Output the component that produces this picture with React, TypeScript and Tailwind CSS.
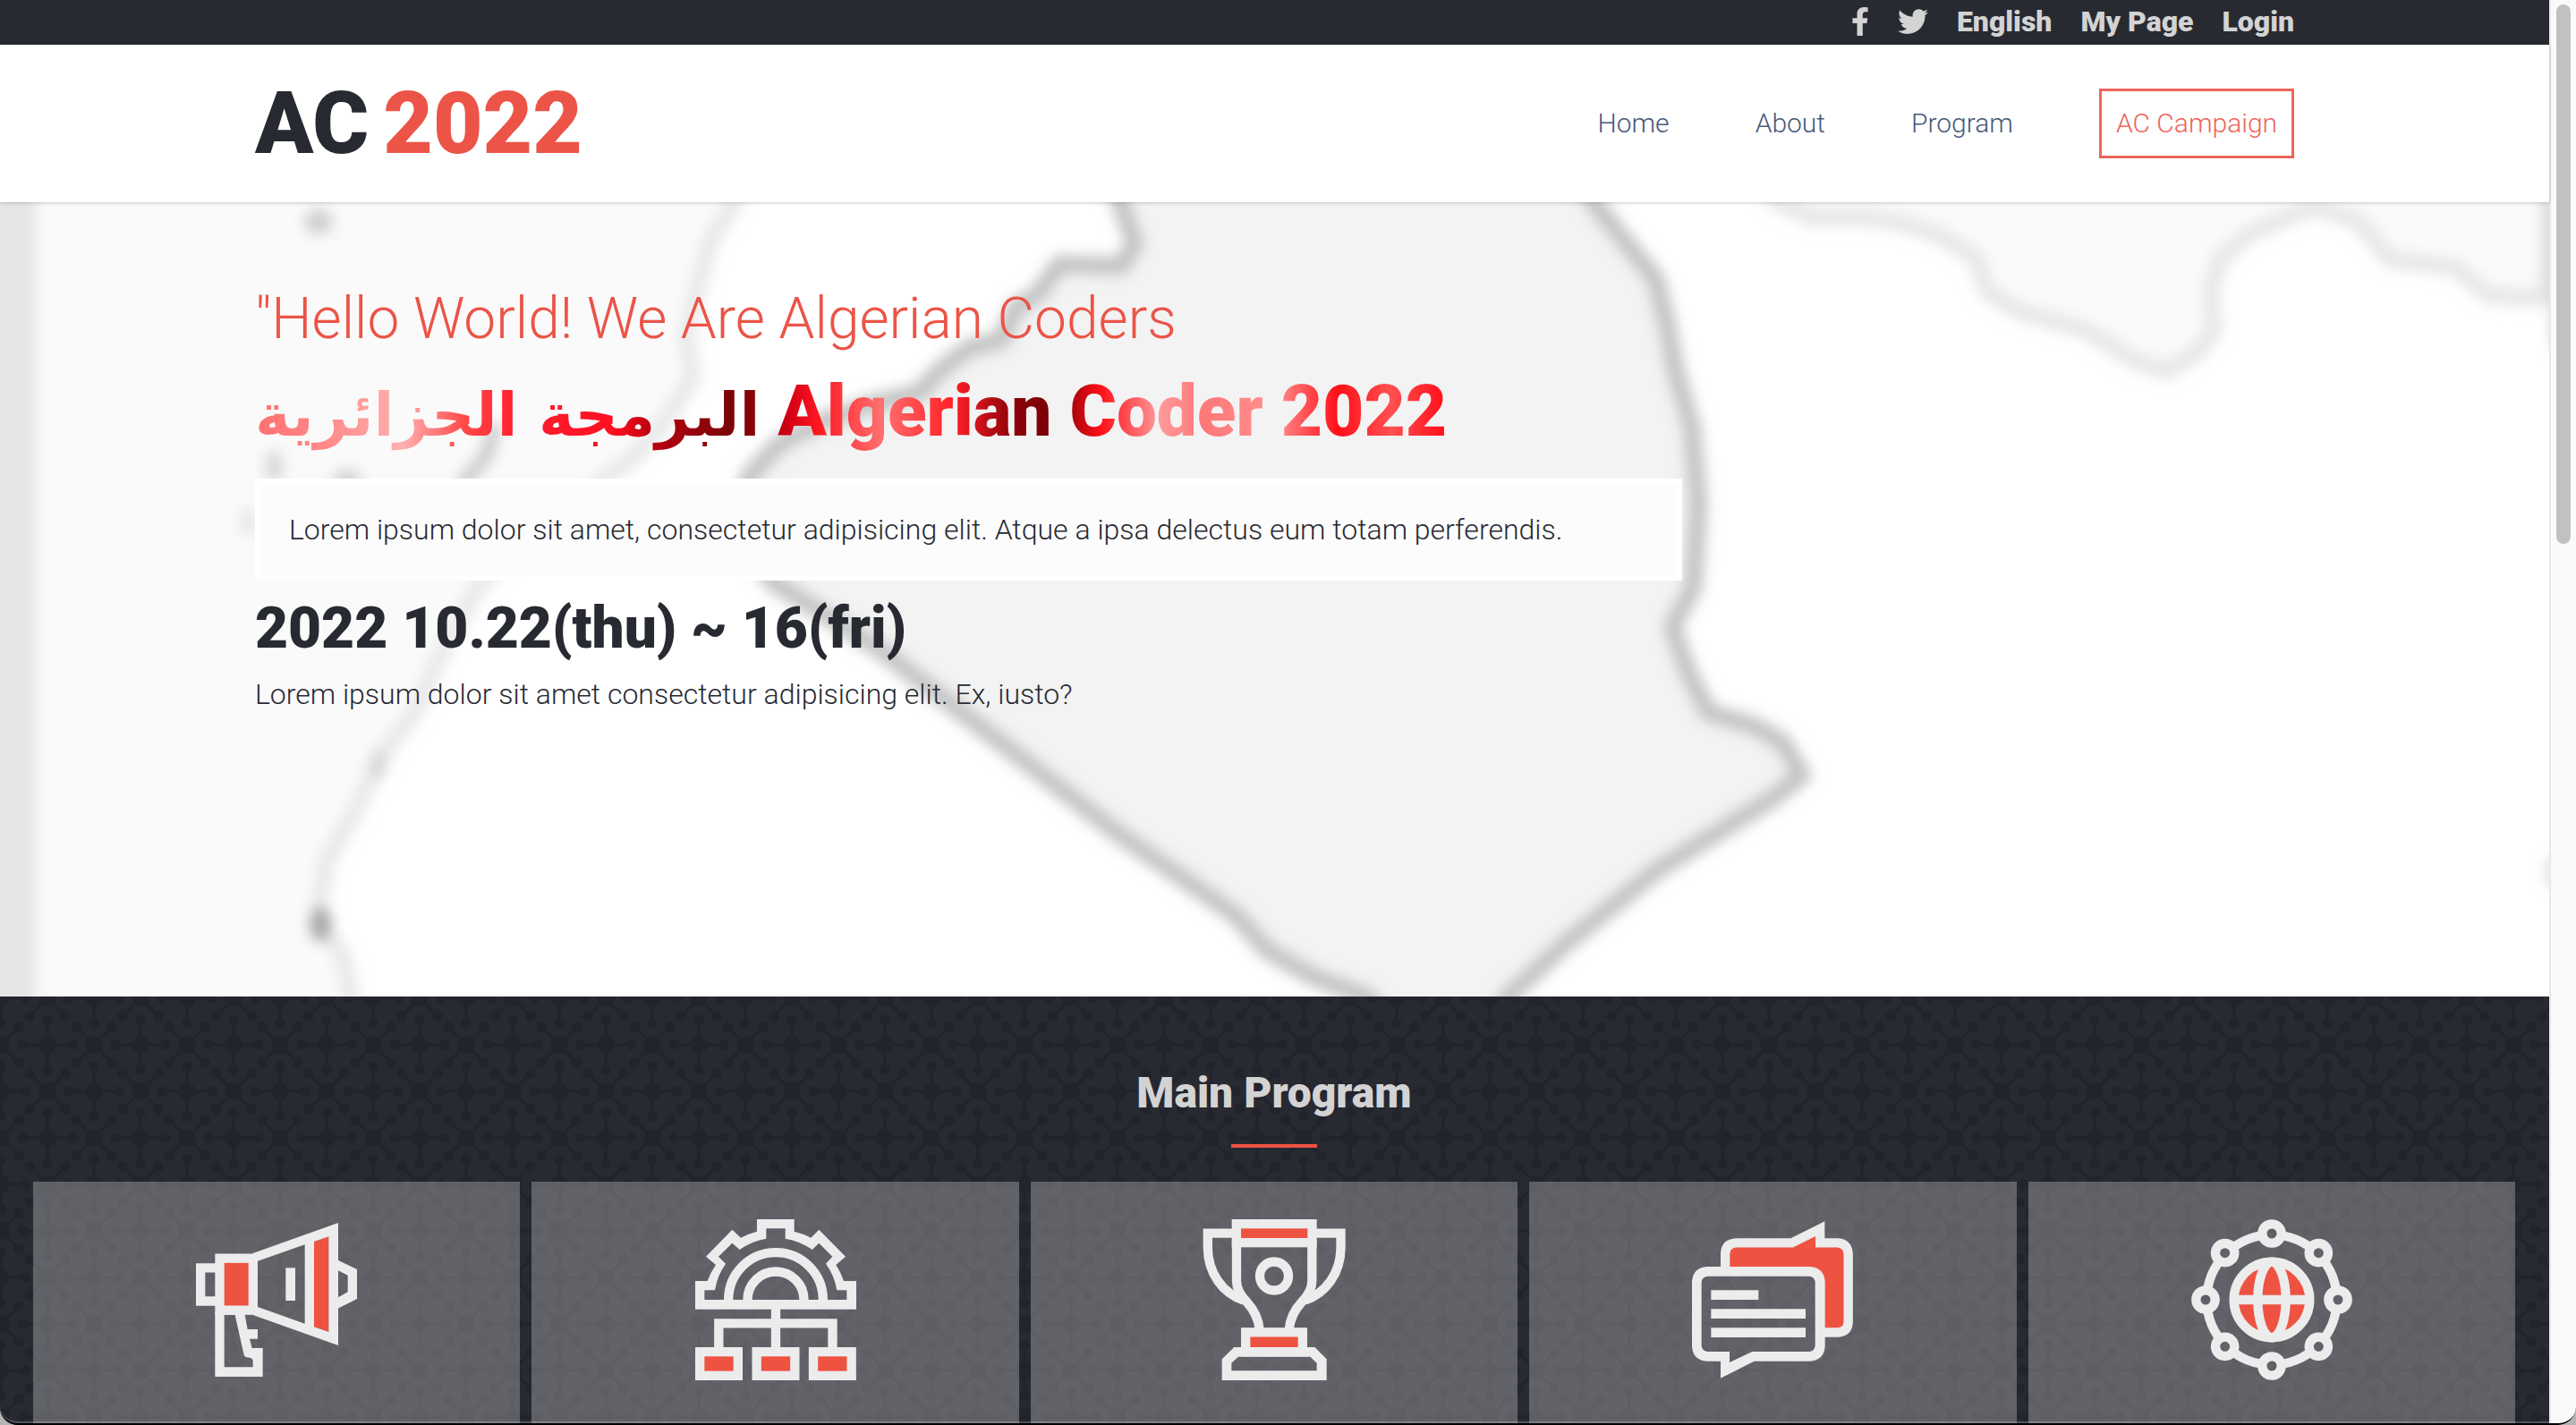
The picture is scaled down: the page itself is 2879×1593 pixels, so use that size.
import React from "react";
import { FaFacebookF, FaTwitter } from "react-icons/fa";

const LIGHT = "#ececec";
const RED = "#ee5342";

function MegaphoneIcon() {
  return (
    <svg viewBox="120 129 540 540" className="size-[180px]" aria-hidden="true">
      <path d="M199 292H135.5V403.5H199" fill="none" stroke={LIGHT} strokeWidth="31" />
      <path d="M516 204L565 187V507L516 490Z" fill={RED} />
      <path
        fillRule="evenodd"
        fill={LIGHT}
        d="M311 243L597 141V552L311 450ZM327 269V423L485 479V214ZM516 204V490L565 507V187Z"
      />
      <rect x="199.5" y="260" width="112" height="174" fill={RED} stroke={LIGHT} strokeWidth="31" />
      <rect x="421" y="292" width="32" height="110" fill={LIGHT} />
      <path fillRule="evenodd" fill={LIGHT} d="M596 266L660 297V396L596 428ZM597 301V391L629 373V317Z" />
      <path
        fillRule="evenodd"
        fill={LIGHT}
        d="M184 440V657H344V561H308L300 530H327V498H293L284 450V440ZM215 450H251L280 580Q282 591 290 592L300 593Q310 595 311 603V625H215Z"
      />
    </svg>
  );
}

function OrganizationIcon() {
  return (
    <svg viewBox="111 129 540 540" className="size-[180px]" aria-hidden="true">
      <path
        fillRule="evenodd"
        fill={LIGHT}
        d="M111 431V336H152A242 242 0 0 1 180 282L147 254L235 164L264 191A242 242 0 0 1 318 170V129H443V170A242 242 0 0 1 499 191L526 164L615 254L583 282A242 242 0 0 1 609 336H651V431ZM142 399H619V367H586A212 212 0 0 0 549 278L571 254L526 209L503 231A212 212 0 0 0 413 194V160H349V194A212 212 0 0 0 260 231L235 209L189 254L213 278A212 212 0 0 0 177 367H142Z"
      />
      <g fill="none" stroke={LIGHT} strokeWidth="31">
        <path d="M222.500 415V399A158.500 158.500 0 0 1 539.500 399V415" />
        <path d="M286.500 415V399A94.500 94.500 0 0 1 475.500 399V415" />
        <path d="M381 425V570M190 570V478H571.500V570" />
        <g fill={RED}>
          <rect x="126.500" y="573.500" width="128" height="80" />
          <rect x="317" y="573.500" width="128" height="80" />
          <rect x="507" y="573.500" width="128" height="80" />
        </g>
      </g>
    </svg>
  );
}

function TrophyIcon() {
  return (
    <svg viewBox="102 129 540 540" className="size-[180px]" aria-hidden="true">
      <g fill="none" stroke={LIGHT} strokeWidth="31">
        <path d="M246 176H149.500V225C150 310 200 378 270 401" />
        <path d="M499 176H595.500V225C595 310 545 378 475 401" />
        <path d="M246 200V335C246 365 262 387 280 406C302 430 320 460 323 500" />
        <path d="M499 200V335C499 365 483 387 465 406C443 430 425 460 422 500" />
        <rect x="245.500" y="144.500" width="254" height="63" fill={RED} />
        <circle cx="372" cy="319.500" r="48" />
        <rect x="276.500" y="508" width="191" height="66" fill={RED} />
      </g>
      <path
        fillRule="evenodd"
        fill={LIGHT}
        d="M238 558H508L548 598V669H197V598ZM252 590L229 611V637H515V611L493 590Z"
      />
    </svg>
  );
}

function ChatIcon() {
  return (
    <svg viewBox="123 129 540 540" className="size-[180px]" aria-hidden="true">
      <path
        fill={RED}
        d="M245 292V243Q252 222 272 220H457L540 183V220H612Q633 226 636 245V475Q633 494 612 497H565V340Q566 292 520 290Z"
      />
      <path
        fill="none"
        stroke={LIGHT}
        strokeWidth="31"
        d="M234.500 296V243Q236 210 272 208H458L552.500 161V208H612Q645 211 647 245V475Q645 506 612 508.500H560"
      />
      <path
        fillRule="evenodd"
        fill={LIGHT}
        d="M173 288H520Q566 292 569 338V555Q566 602 518 605H332L219 662V605H173Q126 602 123 555V338Q126 292 173 288ZM175 320Q157 322 155 340V553Q157 571 175 573H249V609L325 573H517Q534 571 536 553V340Q534 322 517 320Z"
      />
      <path fill={LIGHT} d="M187 367H346V399H187ZM187 430H504V462H187ZM187 493H504V525H187Z" />
    </svg>
  );
}

const NODES = [
  [384, 177],
  [541, 242],
  [606, 399],
  [541, 556],
  [384, 621],
  [227, 556],
  [162, 399],
  [227, 242],
];

function NetworkIcon() {
  return (
    <svg viewBox="114 129 540 540" className="size-[180px]" aria-hidden="true">
      <mask id="ring-gaps" maskUnits="userSpaceOnUse" x="114" y="129" width="540" height="540">
        <rect x="114" y="129" width="540" height="540" fill="#fff" />
        {NODES.map(([x, y]) => (
          <circle key={`${x}-${y}`} cx={x} cy={y} r="30" fill="#000" />
        ))}
      </mask>
      <g fill="none" stroke={LIGHT} strokeWidth="31">
        <circle cx="384" cy="399" r="218" mask="url(#ring-gaps)" />
        {NODES.map(([x, y]) => (
          <circle key={`${x}-${y}`} cx={x} cy={y} r="32" />
        ))}
        <circle cx="384" cy="399" r="127" fill={RED} />
        <ellipse cx="384" cy="399" rx="47" ry="127" />
        <path d="M260 399H508" />
      </g>
    </svg>
  );
}

function MapBackdrop() {
  return (
    <svg
      viewBox="0 123 1552 484"
      preserveAspectRatio="xMidYMid slice"
      className="absolute inset-0 h-full w-full"
      aria-hidden="true"
    >
      <defs>
        <filter id="soft" filterUnits="userSpaceOnUse" x="-40" y="80" width="1640" height="570">
          <feGaussianBlur stdDeviation="4" />
        </filter>
      </defs>
      <rect x="0" y="123" width="1552" height="484" fill="#fff" />
      <g filter="url(#soft)" strokeLinejoin="round">
        <path
          fill="#fafafa"
          stroke="#e8e8e8"
          strokeWidth="10"
          d="M-60 90H465L447 123L433 146L425 174L418 205L422 230L406 255L388 277L366 293L320 330L293 355L271 393L253 433L230 464L217 493L199 524L193 561L208 580L214 605V660H-60Z"
        />
        <path d="M-60 80H22V650H-60Z" fill="#e5e5e5" />
        <g fill="#a8a8a8">
          <ellipse cx="195" cy="563" rx="7" ry="11" />
          <ellipse cx="194" cy="135" rx="9" ry="8" fill="#d0d0d0" />
          <ellipse cx="167" cy="284" rx="6" ry="10" fill="#d8d8d8" />
          <ellipse cx="211" cy="292" rx="9" ry="6" fill="#d0d0d0" />
          <ellipse cx="151" cy="318" rx="5" ry="9" fill="#e6e6e6" />
          <ellipse cx="230" cy="466" rx="5" ry="9" fill="#d4d4d4" />
        </g>
        <path d="M302 258L296 278L280 296" fill="none" stroke="#cbcbcb" strokeWidth="9" />
        <path
          fill="#f3f3f3"
          stroke="#c2c2c2"
          strokeWidth="11"
          d="M668 90L682 123L691 148L683 162L645 161L632 179L618 188L610 207L590 212L572 226L560 239L528 247L500 257L475 270L457 289L448 315L470 354L535 395L600 445L680 507L752 557L772 579L800 595L832 607L860 640H900L918 607L955 573L1010 529L1078 487L1097 472L1085 452L1068 442L1040 434L1028 410L1018 382L1031 357L1034 307L1030 260L1020 226L1015 198L1008 170L990 148L970 123L950 90Z"
        />
        <path
          fill="#fafafa"
          stroke="#e6e6e6"
          strokeWidth="10"
          d="M1060 90L1082 123L1104 133L1130 132L1155 135L1180 143L1203 157L1210 178L1230 190L1270 201L1300 220L1320 226L1340 213L1348 200L1346 176L1352 158L1370 142L1408 126L1435 134L1455 158L1495 163L1515 180L1552 182L1600 184V90Z"
        />
        <path d="M1547 90H1600V212H1553V180H1547Z" fill="#dcdcdc" />
        <ellipse cx="1554" cy="531" rx="4" ry="10" fill="#dcdcdc" />
      </g>
    </svg>
  );
}

function MoleculePattern() {
  const diagonal = (x: number, y: number) => (
    <g key={`d${x}-${y}`}>
      <path d={`M${x - 20} ${y - 20}L${x + 20} ${y + 20}M${x + 20} ${y - 20}L${x - 20} ${y + 20}`} />
      <circle cx={x} cy={y} r="8" />
      {[-20, 20].map((dx) => [-20, 20].map((dy) => <circle key={`${dx}${dy}`} cx={x + dx} cy={y + dy} r="4" />))}
    </g>
  );
  const upright = (x: number, y: number) => (
    <g key={`u${x}-${y}`}>
      <path d={`M${x - 28} ${y}H${x + 28}M${x} ${y - 28}V${y + 28}`} />
      <circle cx={x} cy={y} r="8" />
      <circle cx={x - 28} cy={y} r="4" />
      <circle cx={x + 28} cy={y} r="4" />
      <circle cx={x} cy={y - 28} r="4" />
      <circle cx={x} cy={y + 28} r="4" />
    </g>
  );
  return (
    <svg className="absolute inset-0 h-full w-full" aria-hidden="true">
      <pattern id="molecules" width="104" height="104" patternUnits="userSpaceOnUse" x="1" y="2">
        <g fill="#22242d" stroke="#22242d" strokeWidth="4">
          {upright(52, 52)}
          {[
            [0, 0],
            [104, 0],
            [0, 104],
            [104, 104],
          ].map(([x, y]) => upright(x, y))}
          {diagonal(52, 0)}
          {diagonal(52, 104)}
          {diagonal(0, 52)}
          {diagonal(104, 52)}
        </g>
      </pattern>
      <rect width="100%" height="100%" fill="url(#molecules)" />
    </svg>
  );
}

const PROGRAMS = [
  { label: "Announcements", Icon: MegaphoneIcon },
  { label: "Organization", Icon: OrganizationIcon },
  { label: "Awards", Icon: TrophyIcon },
  { label: "Discussion", Icon: ChatIcon },
  { label: "Network", Icon: NetworkIcon },
];

export default function App() {
  return (
    <div className="min-h-screen bg-[#b4b4b4] font-[Roboto,sans-serif] text-[#282a32]">
      <div className="relative flex min-h-screen overflow-hidden rounded-b-[20px]">
        <div className="flex min-w-0 flex-1 flex-col">
          <div className="flex h-[50px] items-center justify-end gap-8 bg-[#282a32] px-[10%] pb-[3px] text-[32px] leading-[38px] font-black text-[#d3d3d3]">
            <a href="#facebook" aria-label="Facebook">
              <FaFacebookF className="h-[34px] w-5" />
            </a>
            <a href="#twitter" aria-label="Twitter">
              <FaTwitter className="size-[34px]" />
            </a>
            <a href="#english">English</a>
            <a href="#my-page">My Page</a>
            <a href="#login">Login</a>
          </div>

          <header className="relative z-10 flex h-[176px] items-center justify-between bg-white px-[10%] shadow-[0_1px_4px_rgba(0,0,0,0.2)]">
            <a href="#home" className="text-[96px] leading-[112px] font-black">
              AC<span className="ml-4 text-[#eb5447]">2022</span>
            </a>
            <nav className="flex items-center gap-24 text-[30px] leading-[38px] font-light text-[#47597a]">
              <a href="#home">Home</a>
              <a href="#about">About</a>
              <a href="#program">Program</a>
              <a href="#campaign" className="border-[3px] border-[#ee655b] px-4 py-[17px] text-[#ee655b]">
                AC Campaign
              </a>
            </nav>
          </header>

          <main className="flex flex-1 flex-col">
            <section className="relative h-[888px] overflow-hidden px-[10%] pt-[93px]">
              <MapBackdrop />
              <div className="relative">
                <p className="text-[64px] leading-[76px] font-light text-[#eb5447]">
                  "Hello World! We Are Algerian Coders
                </p>
                <h1 className="mt-3 w-fit bg-[linear-gradient(90deg,#ff7070_0px,#ff8a8a_80px,#ffb0b0_165px,#ff4848_235px,#ff2030_290px,#ff1020_400px,#b80010_445px,#7a0408_530px,#8a0408_560px,#d80014_600px,#ff1822_630px,#ff7070_700px,#ff2026_780px,#8a0008_850px,#780006_895px,#ff1018_945px,#ff9a9a_1010px,#ff7878_1060px,#ff9090_1140px,#ff1018_1210px,#ff5050_1270px,#ff1420_1325px)] bg-clip-text text-[80px] leading-[106px] font-black text-transparent">
                  <span lang="ar" dir="rtl" className="font-['DejaVu_Sans',sans-serif] text-[67px] leading-none font-bold">
                    البرمجة الجزائرية
                  </span>{" "}
                  Algerian Coder 2022
                </h1>
                <p className="mt-[22px] w-[70%] border-6 border-white bg-[#fcfcfc] p-8 text-[32px] leading-[38px] font-light">
                  Lorem ipsum dolor sit amet, consectetur adipisicing elit. Atque a ipsa delectus eum totam
                  perferendis.
                </p>
                <p className="mt-4 text-[64px] leading-[76px] font-black">2022 10.22(thu) ~ 16(fri)</p>
                <p className="mt-4 text-[32px] leading-[38px] font-light">
                  Lorem ipsum dolor sit amet consectetur adipisicing elit. Ex, iusto?
                </p>
              </div>
            </section>

            <section className="relative flex flex-1 flex-col overflow-hidden bg-[#282a32] pt-20 pr-[38px] pl-[37px]">
              <MoleculePattern />
              <h2 className="relative text-center text-[48px] leading-[56px] font-black text-[#d3d3d3]">
                Main Program
              </h2>
              <div className="relative mx-auto mt-[29px] h-1 w-24 bg-[#ee5342]" />
              <ul className="relative mt-[38px] grid flex-1 grid-cols-5 gap-[13px]">
                {PROGRAMS.map(({ label, Icon }) => (
                  <li key={label} aria-label={label} className="flex justify-center bg-[#d3d3d3]/34 pt-[42px] pb-12">
                    <Icon />
                  </li>
                ))}
              </ul>
            </section>
          </main>
        </div>

        <div className="flex w-[30px] justify-center border-l-2 border-[#e8e8e8] bg-[#fafafa] pt-[5px]">
          <div className="h-[38%] w-4 rounded-full bg-[#c1c1c1]" />
        </div>
        <div className="pointer-events-none absolute inset-0 rounded-b-[20px] border-b-2 border-black shadow-[inset_0_-2px_0_rgba(255,255,255,0.2)]" />
      </div>
    </div>
  );
}
